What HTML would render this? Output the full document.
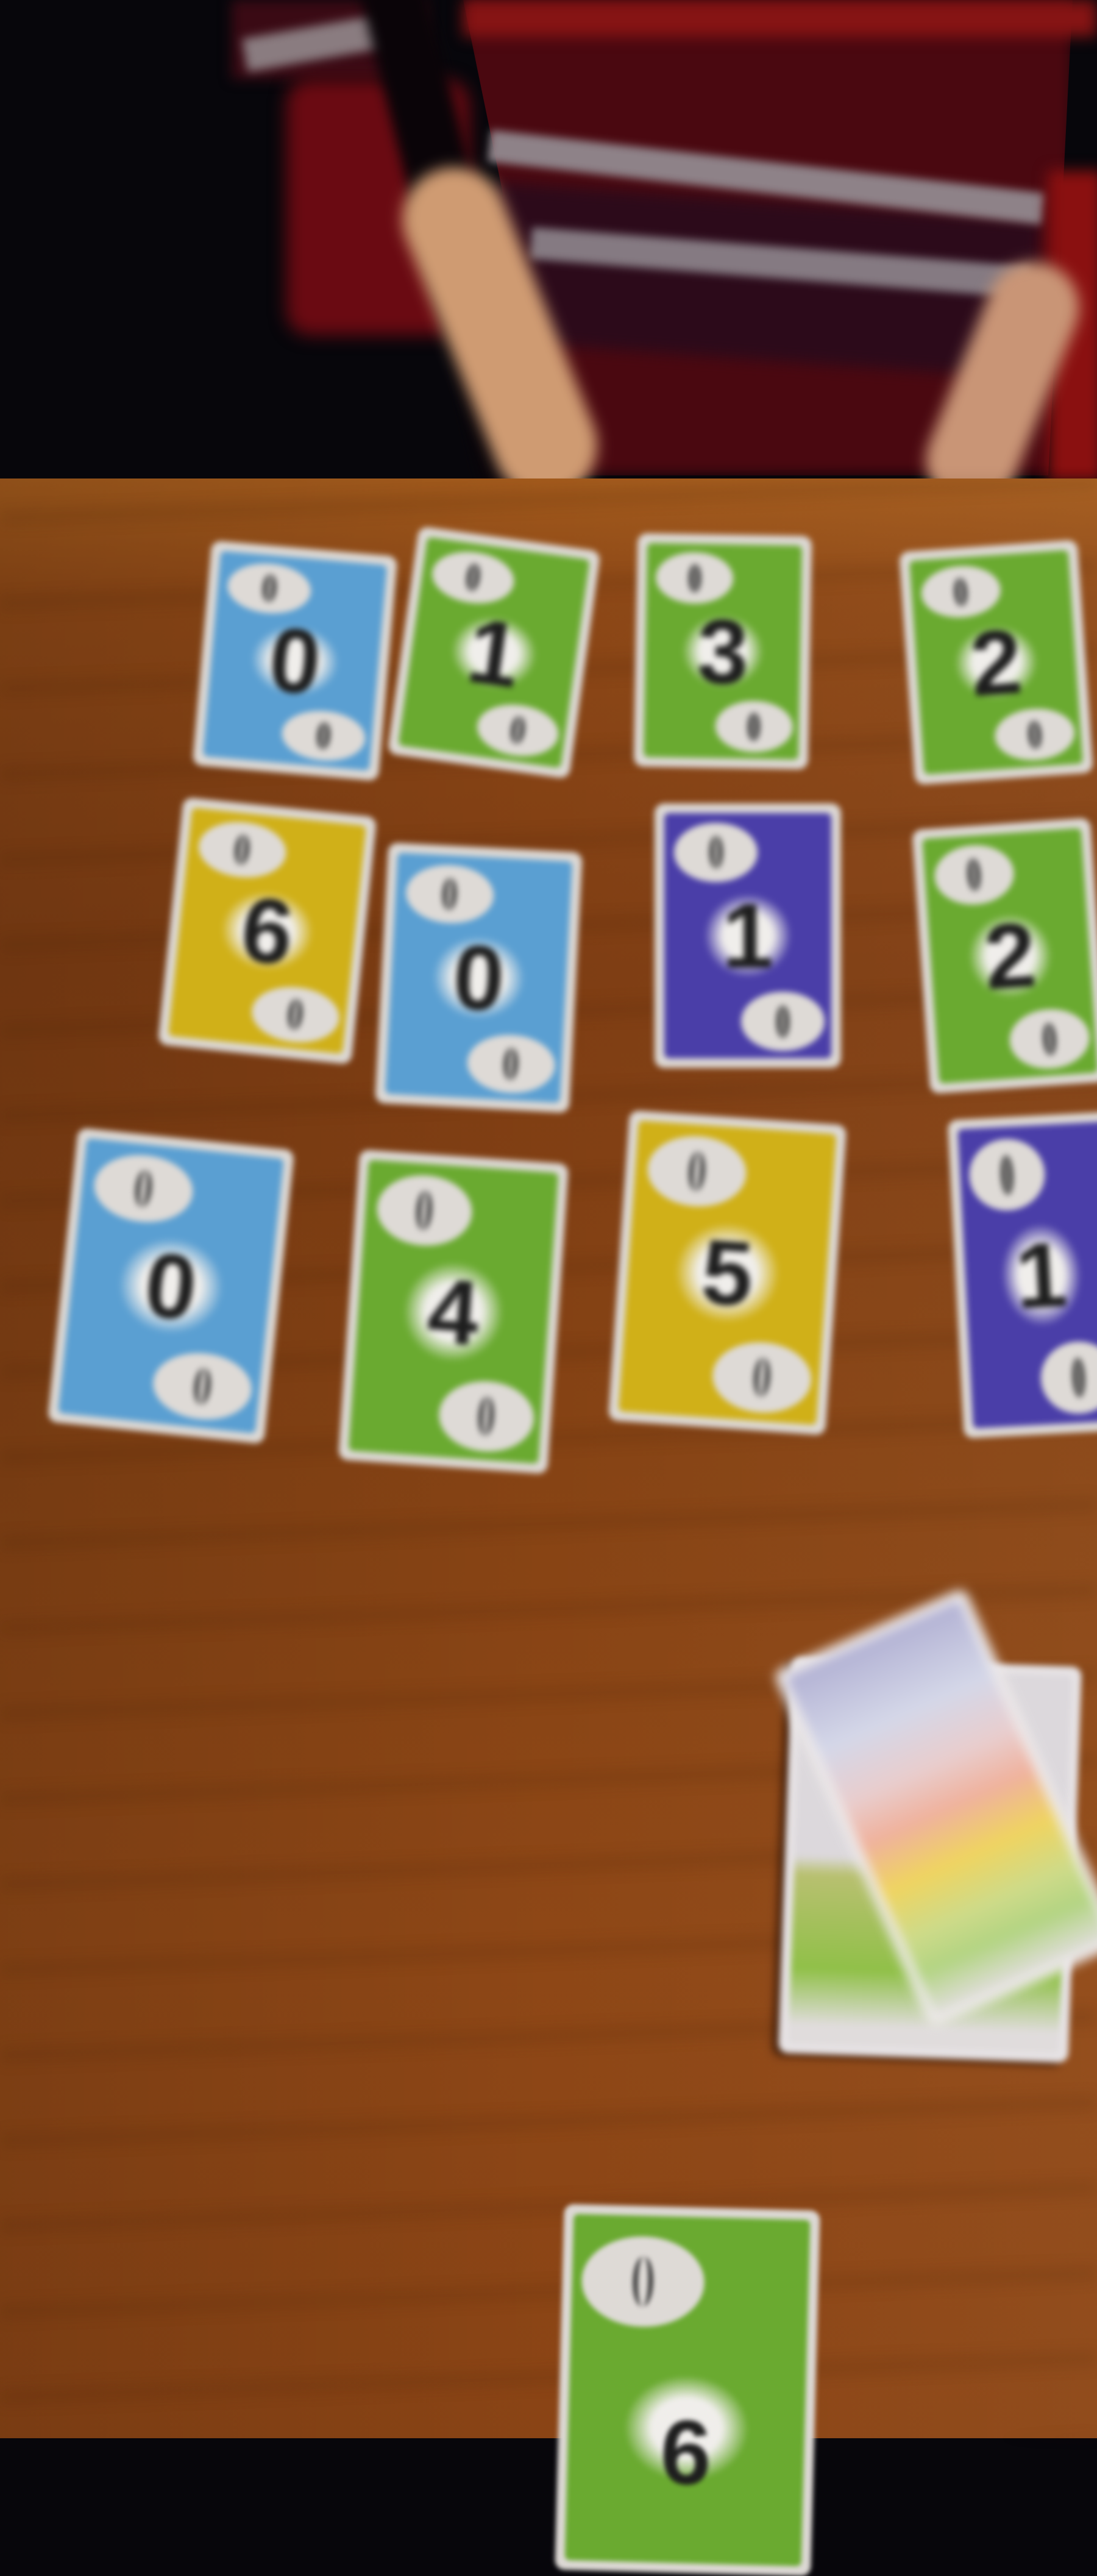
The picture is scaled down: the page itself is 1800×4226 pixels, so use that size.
<!DOCTYPE html>
<html><head><meta charset="utf-8"><style>
html,body{margin:0;padding:0}
body{width:1800px;height:4000px;position:relative;overflow:hidden;background:#07060b;font-family:"Liberation Sans",sans-serif}
.abs{position:absolute}
.table{left:0;top:785px;width:1800px;height:3215px;background:linear-gradient(90deg,rgba(0,0,0,.12),rgba(0,0,0,0) 50%,rgba(255,200,140,.06)),linear-gradient(180deg,#a25a1c 0%,#8c4716 6%,#7e3d13 25%,#864314 50%,#8e4716 75%,#8a4415 100%)}
.grain{left:0;top:785px;width:1800px;height:3215px;background:repeating-linear-gradient(178deg,rgba(0,0,0,0) 0 50px,rgba(60,25,5,.10) 50px 80px,rgba(0,0,0,0) 80px 140px);filter:blur(10px)}
.card{position:absolute;background:#dcd8d4;border-radius:16px;box-sizing:border-box;padding:16px;filter:blur(5px)}
.in{width:100%;height:100%;border-radius:8px;position:relative;overflow:hidden}
.o1,.o2{position:absolute;width:50%;height:24%;background:#dedad6;border-radius:50%}
.o1{left:6%;top:4%}.o2{right:4%;bottom:3%}
.o1::after,.o2::after{content:"";position:absolute;left:42%;top:22%;width:16%;height:56%;border-left:8px solid #333;border-right:8px solid #333;border-radius:50%;box-sizing:border-box}
.c{position:absolute;left:24%;top:33%;width:52%;height:34%;border-radius:50%;background:radial-gradient(ellipse,rgba(240,238,235,1) 40%,rgba(240,238,235,0) 72%)}
.n{position:absolute;left:0;right:0;top:50%;transform:translateY(-50%);text-align:center;font-weight:bold;color:#1e1e1e;font-size:150px;line-height:1}
.blue{background:#5a9fd2}.green{background:#6aaa30}.yellow{background:#d0b018}.purple{background:#4a3ea8}
</style></head><body>
<!-- top scene -->
<div class="abs" style="left:380px;top:0;width:320px;height:130px;background:#3a0a14;filter:blur(10px)"></div>
<div class="abs" style="left:400px;top:40px;width:270px;height:55px;background:#8a7c80;filter:blur(8px);transform:rotate(-10deg)"></div>
<div class="abs" style="left:470px;top:130px;width:300px;height:420px;background:#6a0a12;border-radius:40px;filter:blur(14px)"></div>
<!-- torso -->
<div class="abs" style="left:760px;top:0;width:1000px;height:780px;background:#4a0810;filter:blur(12px);clip-path:polygon(0 0,100% 0,96% 100%,16% 100%)"></div>
<div class="abs" style="left:760px;top:0;width:1040px;height:60px;background:#861414;filter:blur(12px)"></div>
<div class="abs" style="left:800px;top:330px;width:900px;height:260px;background:#2c0a1a;filter:blur(12px);transform:rotate(4deg)"></div>
<div class="abs" style="left:800px;top:265px;width:915px;height:52px;background:#8e8288;filter:blur(7px);transform:rotate(6.5deg)"></div>
<div class="abs" style="left:870px;top:405px;width:820px;height:52px;background:#857a82;filter:blur(7px);transform:rotate(4.5deg)"></div>
<!-- dark gap line -->
<div class="abs" style="left:690px;top:-20px;width:110px;height:820px;background:#0a0408;filter:blur(10px);transform:origin(top left);transform:skewX(14deg)"></div>
<!-- right sleeve -->
<div class="abs" style="left:1720px;top:280px;width:90px;height:510px;background:#8a1010;filter:blur(12px)"></div>
<!-- arms -->
<div class="abs" style="left:735px;top:260px;width:170px;height:570px;background:#cf9b72;border-radius:85px;filter:blur(12px);transform:rotate(-22deg)"></div>
<div class="abs" style="left:1570px;top:420px;width:150px;height:420px;background:#c99576;border-radius:75px;filter:blur(12px);transform:rotate(22deg)"></div>

<div class="table abs"></div>
<div class="grain abs"></div>

<!-- row1 -->
<div class="card" style="left:331px;top:899px;width:306px;height:370px;transform:rotate(5deg)"><div class="in blue"><div class="o1"></div><div class="o2"></div><div class="c"></div><div class="n">0</div></div></div>
<div class="card" style="left:660px;top:882px;width:301px;height:377px;transform:rotate(8deg)"><div class="in green"><div class="o1"></div><div class="o2"></div><div class="c"></div><div class="n">1</div></div></div>
<div class="card" style="left:1043px;top:877px;width:286px;height:383px;transform:rotate(1deg)"><div class="in green"><div class="o1"></div><div class="o2"></div><div class="c"></div><div class="n">3</div></div></div>
<div class="card" style="left:1488px;top:895px;width:293px;height:383px;transform:rotate(-4deg)"><div class="in green"><div class="o1"></div><div class="o2"></div><div class="c"></div><div class="n">2</div></div></div>
<!-- row2 -->
<div class="card" style="left:279px;top:1323px;width:319px;height:408px;transform:rotate(6deg)"><div class="in yellow"><div class="o1"></div><div class="o2"></div><div class="c"></div><div class="n">6</div></div></div>
<div class="card" style="left:626px;top:1390px;width:319px;height:428px;transform:rotate(3deg)"><div class="in blue"><div class="o1"></div><div class="o2"></div><div class="c"></div><div class="n">0</div></div></div>
<div class="card" style="left:1074px;top:1318px;width:306px;height:434px;transform:rotate(0deg)"><div class="in purple"><div class="o1"></div><div class="o2"></div><div class="c"></div><div class="n">1</div></div></div>
<div class="card" style="left:1511px;top:1351px;width:293px;height:434px;transform:rotate(-4deg)"><div class="in green"><div class="o1"></div><div class="o2"></div><div class="c"></div><div class="n">2</div></div></div>
<!-- row3 -->
<div class="card" style="left:102px;top:1867px;width:357px;height:485px;transform:rotate(6deg)"><div class="in blue"><div class="o1"></div><div class="o2"></div><div class="c"></div><div class="n">0</div></div></div>
<div class="card" style="left:572px;top:1897px;width:344px;height:510px;transform:rotate(4deg)"><div class="in green"><div class="o1"></div><div class="o2"></div><div class="c"></div><div class="n">4</div></div></div>
<div class="card" style="left:1015px;top:1833px;width:357px;height:510px;transform:rotate(4deg)"><div class="in yellow"><div class="o1"></div><div class="o2"></div><div class="c"></div><div class="n">5</div></div></div>
<div class="card" style="left:1568px;top:1830px;width:281px;height:523px;transform:rotate(-3deg)"><div class="in purple"><div class="o1"></div><div class="o2"></div><div class="c"></div><div class="n">1</div></div></div>
<!-- deck stack -->
<div class="card" style="left:1288px;top:2726px;width:476px;height:650px;transform:rotate(2deg);background:#e6e2e4;box-shadow:-10px 6px 10px rgba(20,5,0,.6)"><div class="in" style="background:linear-gradient(180deg,#dcd8dc 0 50%,#b8c070 55%,#90c048 80%,#e0dcdc 95%)"></div></div>
<!-- top card -->
<div class="card" style="left:1383px;top:2646px;width:344px;height:640px;transform:rotate(-24deg);background:#eeeaea;filter:blur(9px)"><div class="in" style="background:linear-gradient(180deg,#a8a8d0 0%,#d0d4e8 22%,#e8c8c8 38%,#f0a890 50%,#f0d048 64%,#c8d878 78%,#a8d070 88%,#e0dcdc 100%);opacity:.85"></div></div>
<!-- bottom card -->
<div class="card" style="left:918px;top:3621px;width:420px;height:600px;transform:rotate(1.5deg);filter:blur(4px)"><div class="in green"><div class="o1" style="height:26%;width:52%;left:4%;top:6%"></div><div class="c" style="top:46%;height:30%"></div><div class="n" style="top:68%">6</div></div></div>
</body></html>
